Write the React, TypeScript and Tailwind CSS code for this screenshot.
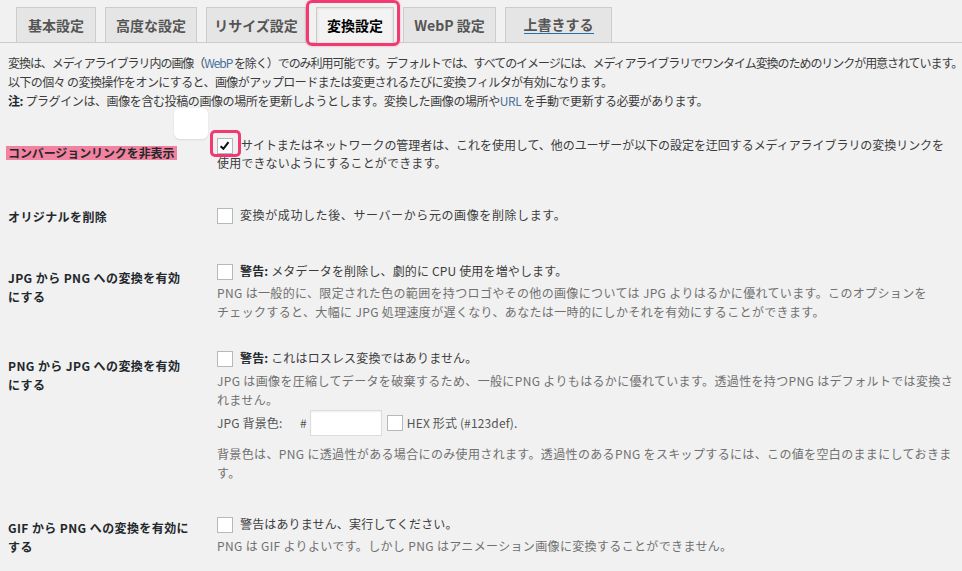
import { ReactNode } from "react";

const tabs = [
  { label: "基本設定", w: "w-[80px]" },
  { label: "高度な設定", w: "w-[92px]" },
  { label: "リサイズ設定", w: "w-[100px]" },
];

function Box({ checked = false }: { checked?: boolean }) {
  return (
    <span className="inline-block w-4 h-4 bg-white border border-[#b4b9be] align-[-4px] relative">
      {checked && (
        <svg viewBox="0 0 16 16" className="absolute inset-0 w-[14px] h-[14px]">
          <path d="M3 8.2 L6.2 11.2 L12 3.6" fill="none" stroke="#111" strokeWidth="2.4" />
        </svg>
      )}
    </span>
  );
}

interface RowProps {
  label: ReactNode;
  rowClass: string;
  labelClass: string;
  children: ReactNode;
}

function Row({ label, rowClass, labelClass, children }: RowProps) {
  return (
    <div className={`flex ${rowClass}`}>
      <div
        className={`w-[217px] shrink-0 pl-[8px] font-bold text-[#23282d] leading-[19px] tracking-[0.4px] ${labelClass}`}
      >
        {label}
      </div>
      <div className="flex-1 whitespace-nowrap tracking-[0.15px]">{children}</div>
    </div>
  );
}

function Desc({ children, className = "" }: { children: ReactNode; className?: string }) {
  return <p className={`text-[#707070] leading-[19px] tracking-[0.35px] ${className}`}>{children}</p>;
}

export default function App() {
  return (
    <div className="w-[962px] h-[571px] overflow-hidden relative bg-[#f1f1f1] text-[12px] tracking-[-0.4px] text-[#3c3c3c] font-['Noto_Sans_CJK_JP',sans-serif]">
      {/* タブ */}
      <nav className="flex gap-[9px] pl-[16px] pt-[7px] border-b border-[#ccc] tracking-normal">
        {tabs.map((t) => (
          <div
            key={t.label}
            className={`${t.w} h-[35px] -mb-px flex items-center justify-center bg-[#e5e5e5] border border-b-0 border-[#ccc] text-[14px] font-bold text-[#555]`}
          >
            {t.label}
          </div>
        ))}
        <div className="relative ml-px">
          <div className="w-[78px] h-[36px] -mb-px flex items-center justify-center bg-[#f3f3f3] border border-b-0 border-[#ccc] text-[14px] font-bold text-black shadow-[inset_0_0_3px_rgba(0,0,0,0.12)]">
            変換設定
          </div>
          <div className="absolute -left-[10px] -top-[7px] w-[94px] h-[46px] border-[3px] border-[#f23a72] rounded-[6px] shadow-[0_0_2px_rgba(242,58,114,0.5)]" />
        </div>
        <div className="w-[93px] h-[35px] -mb-px flex items-center justify-center bg-[#e5e5e5] border border-b-0 border-[#ccc] text-[14px] font-bold text-[#555]">
          WebP 設定
        </div>
        <div className="w-[107px] h-[35px] -mb-px flex items-center justify-center bg-[#e5e5e5] border border-b-0 border-[#ccc] text-[14px] font-bold text-[#555]">
          <span className="border-b-[1.5px] border-[#2271b1] leading-[17px]">上書きする</span>
        </div>
      </nav>

      {/* 説明 */}
      <div className="pl-[8px] pt-[10px] leading-[19px] whitespace-nowrap">
        <p className="tracking-[-1.05px]">
          変換は、メディアライブラリ内の画像（<span className="text-[#4a6f9c]">WebP</span> を除く）でのみ利用可能です。デフォルトでは、すべてのイメージには、メディアライブラリでワンタイム変換のためのリンクが用意されています。
        </p>
        <p className="tracking-[-0.6px]">以下の個々 の変換操作をオンにすると、画像がアップロードまたは変更されるたびに変換フィルタが有効になります。</p>
        <p>
          <b className="text-[#23282d]">注:</b> プラグインは、画像を含む投稿の画像の場所を更新しようとします。変換した画像の場所や<span className="text-[#4a6f9c]">URL</span> を手動で更新する必要があります。
        </p>
      </div>

      {/* コンバージョンリンクを非表示 */}
      <Row
        rowClass="pt-[26px]"
        labelClass="pt-[7px]"
        label={
          <span className="tracking-[-0.1px] bg-[linear-gradient(to_bottom,transparent_2px,#f2829f_2px,#f2829f_16px,transparent_16px)] pr-[3px] -ml-[2px] pl-[2px]">
            コンバージョンリンクを非表示
          </span>
        }
      >
        <p className="leading-[18px]">
          <span className="relative inline-block">
            <Box checked />
            <span className="absolute -left-[7px] -top-[6px] w-[31px] h-[27px] border-[3px] border-[#f23a72] rounded-[5px]" />
          </span>
          <span className="ml-[8px] tracking-[-0.05px]">
            サイトまたはネットワークの管理者は、これを使用して、他のユーザーが以下の設定を迂回するメディアライブラリの変換リンクを
          </span>
          <br />
          使用できないようにすることができます。
        </p>
      </Row>

      {/* オリジナルを削除 */}
      <Row rowClass="pt-[34px]" labelClass="pt-[1px]" label="オリジナルを削除">
        <p className="leading-[18px]">
          <Box />
          <span className="ml-[7px] tracking-[0.6px]">変換が成功した後、サーバーから元の画像を削除します。</span>
        </p>
      </Row>

      {/* JPG → PNG */}
      <Row
        rowClass="pt-[36px]"
        labelClass="pt-[6px]"
        label={
          <>
            JPG から PNG への変換を有効
            <br />
            にする
          </>
        }
      >
        <p className="leading-[18px]">
          <Box />
          <span className="ml-[7px]">
            <b className="text-[#23282d]">警告:</b> メタデータを削除し、劇的に CPU 使用を増やします。
          </span>
        </p>
        <Desc className="mt-[3px]">
          PNG は一般的に、限定された色の範囲を持つロゴやその他の画像については JPG よりはるかに優れています。このオプションを
          <br />
          チェックすると、大幅に JPG 処理速度が遅くなり、あなたは一時的にしかそれを有効にすることができます。
        </Desc>
      </Row>

      {/* PNG → JPG */}
      <Row
        rowClass="pt-[28px]"
        labelClass="pt-[7px]"
        label={
          <>
            PNG から JPG への変換を有効
            <br />
            にする
          </>
        }
      >
        <p className="leading-[18px]">
          <Box />
          <span className="ml-[7px]">
            <b className="text-[#23282d]">警告:</b> これはロスレス変換ではありません。
          </span>
        </p>
        <Desc className="mt-[4px]">
          JPG は画像を圧縮してデータを破棄するため、一般にPNG よりもはるかに優れています。透過性を持つPNG はデフォルトでは変換さ
          <br />
          れません。
        </Desc>
        <div className="flex items-center h-[26px] mt-[1px] text-[#555]">
          <span className="w-[83px]">JPG 背景色:</span>
          <span>#</span>
          <input
            type="text"
            className="ml-[3px] w-[72px] h-[26px] bg-white border border-[#ddd] shadow-[inset_0_1px_2px_rgba(0,0,0,0.07)] outline-none"
          />
          <span className="ml-[5px] flex">
            <Box />
          </span>
          <span className="ml-[4px]">HEX 形式 (#123def).</span>
        </div>
        <Desc className="mt-[8px]">
          背景色は、PNG に透過性がある場合にのみ使用されます。透過性のあるPNG をスキップするには、この値を空白のままにしておきま
          <br />
          す。
        </Desc>
      </Row>

      {/* GIF → PNG */}
      <Row
        rowClass="pt-[33px]"
        labelClass="pt-[3px]"
        label={
          <>
            GIF から PNG への変換を有効に
            <br />
            する
          </>
        }
      >
        <p className="leading-[18px]">
          <Box />
          <span className="ml-[7px]">警告はありません、実行してください。</span>
        </p>
        <Desc className="mt-[3px]">PNG は GIF よりよいです。しかし PNG はアニメーション画像に変換することができません。</Desc>
      </Row>

      {/* 白い四角 */}
      <div className="absolute left-[174px] top-[108px] w-[34px] h-[31px] bg-white rounded-[6px] shadow-[0_1px_2px_rgba(0,0,0,0.1)]" />
    </div>
  );
}
